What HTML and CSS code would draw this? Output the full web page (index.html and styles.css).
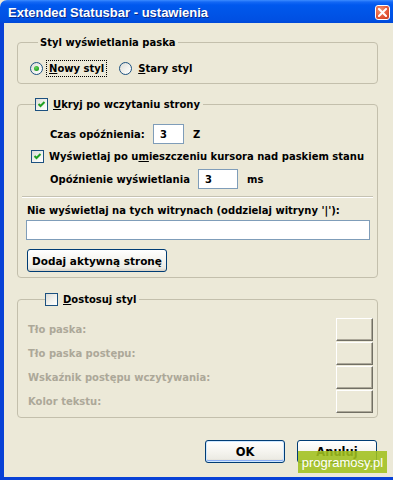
FILE: index.html
```html
<!DOCTYPE html>
<html lang="pl">
<head>
<meta charset="utf-8">
<title>Extended Statusbar - ustawienia</title>
<link rel="stylesheet" href="styles.css">
</head>
<body>
<div class="window">
  <div class="titlebar">
    <span class="title">Extended Statusbar - ustawienia</span>
    <span class="close"><svg width="9" height="9" viewBox="0 0 9 9"><path d="M1 1 L8 8 M8 1 L1 8" stroke="#fff" stroke-width="2" stroke-linecap="square"/></svg></span>
  </div>
  <div class="frame">
    <fieldset class="group g1">
      <legend class="legend">Styl wyświetlania paska</legend>
      <div class="radios">
        <div class="opt first"><span class="radio on"></span><span class="focus"><u>N</u>owy styl</span></div>
        <div class="opt"><span class="radio"></span><span class="optlbl"><u>S</u>tary styl</span></div>
      </div>
    </fieldset>

    <fieldset class="group g2">
      <legend class="legend chk-legend"><span class="check"><svg width="11" height="11" viewBox="0 0 11 11"><path d="M2.5 5 L4.5 7 L8.5 3" fill="none" stroke="#21a121" stroke-width="2"/></svg></span><span><u>U</u>kryj po wczytaniu strony</span></legend>
      <div class="row r-delay"><span class="lab lab-delay">Czas opóźnienia:</span><span class="field f-small">3</span><span class="unit">Z</span></div>
      <div class="row r-hover"><span class="check"><svg width="11" height="11" viewBox="0 0 11 11"><path d="M2.5 5 L4.5 7 L8.5 3" fill="none" stroke="#21a121" stroke-width="2"/></svg></span><span>Wyświetlaj po u<u>m</u>ieszczeniu kursora nad paskiem stanu</span></div>
      <div class="row r-show"><span class="lab lab-show">Opóźnienie wyświetlania</span><span class="field f-mid">3</span><span class="unit">ms</span></div>
      <div class="sep"></div>
      <div class="sites-label">Nie wyświetlaj na tych witrynach (oddzielaj witryny '|'):</div>
      <div class="field f-wide"></div>
      <button class="btn add">Dodaj aktywną stronę</button>
    </fieldset>

    <fieldset class="group g3">
      <legend class="legend chk-legend"><span class="check"></span><span><u>D</u>ostosuj styl</span></legend>
      <div class="crow"><span class="dis">Tło paska:</span><span class="swatch"></span></div>
      <div class="crow"><span class="dis">Tło paska postępu:</span><span class="swatch"></span></div>
      <div class="crow"><span class="dis">Wskaźnik postępu wczytywania:</span><span class="swatch"></span></div>
      <div class="crow"><span class="dis">Kolor tekstu:</span><span class="swatch"></span></div>
    </fieldset>

    <div class="footer">
      <button class="btn dlg default">OK</button>
      <button class="btn dlg">Anuluj</button>
    </div>
  </div>
  <div class="watermark">programosy.pl</div>
</div>
</body>
</html>
```

FILE: styles.css
```css
* { box-sizing: border-box; }
html, body { margin: 0; padding: 0; background: #ece9d8; }
body { font-family: "DejaVu Sans", Verdana, sans-serif; font-size: 10px; font-weight: bold; color: #000; }

.window {
  position: relative;
  width: 393px;
  height: 480px;
  display: flex;
  flex-direction: column;
  overflow: hidden;
}

.titlebar {
  height: 23px;
  flex: none;
  display: flex;
  align-items: center;
  justify-content: space-between;
  padding: 0 3px 0 8px;
  border-top-left-radius: 7px;
  background: linear-gradient(#3d8cff 0px, #1468f5 2px, #0058ee 5px, #0055e8 50%, #0050e3 85%, #0048d8 100%);
}
.title {
  color: #fff;
  font-family: "Liberation Sans", Arial, sans-serif;
  font-size: 13px;
  font-weight: bold;
  text-shadow: 1px 1px 0 #0a2a8a;
  margin-top: 1px;
}
.close {
  width: 15px;
  height: 15px;
  margin-top: 1px;
  border: 1px solid #fff;
  border-radius: 3px;
  background: radial-gradient(circle at 35% 30%, #f1946e 0%, #e4593a 55%, #c83a1c 100%);
  display: flex;
  align-items: center;
  justify-content: center;
}

.frame {
  flex: 1;
  border-left: 4px solid #0841d6;
  border-bottom: 3px solid #0841d6;
  display: flex;
  flex-direction: column;
}

.group {
  margin: 0 0 0 13px;
  width: 361px;
  border: 1px solid #c3bfac;
  border-radius: 4px;
  padding: 0;
  min-width: 0;
}
.legend {
  padding: 0 2px;
  margin-left: 8px;
  line-height: 13px;
  height: 13px;
  display: flex;
  align-items: center;
}
.chk-legend { margin-left: 17px; padding: 0 3px 0 0; gap: 5px; }

.g1 { margin-top: 13px; padding: 11px 0 6px 12px; }
.radios { display: flex; align-items: center; height: 17px; }
.opt { display: flex; align-items: center; }
.opt.first { margin-right: 12px; }
.radio {
  width: 13px;
  height: 13px;
  border-radius: 50%;
  border: 1px solid #1c5180;
  background: linear-gradient(135deg, #dcdcd7 0%, #f4f4f0 60%, #ffffff 100%);
  display: flex;
  align-items: center;
  justify-content: center;
  margin-right: 3px;
}
.radio.on::after {
  content: "";
  width: 5px;
  height: 5px;
  border-radius: 50%;
  background: radial-gradient(circle at 40% 35%, #66d35a 0%, #21a121 70%);
}
.focus {
  border: 1px dotted #000;
  padding: 1px 2px;
  line-height: 13px;
}
.optlbl { padding-left: 3px; }

.check {
  width: 13px;
  height: 13px;
  flex: none;
  border: 1px solid #1c5180;
  background: linear-gradient(135deg, #dcdcd7 0%, #f4f4f0 60%, #ffffff 100%);
  display: flex;
  align-items: center;
  justify-content: center;
}

.g2 { margin-top: 14px; padding: 13px 0 5px 0; }
.row { display: flex; align-items: center; }
.r-delay { height: 20px; padding-left: 32px; }
.r-hover { height: 13px; margin-top: 6px; padding-left: 13px; gap: 5px; }
.r-show { height: 20px; margin-top: 6px; padding-left: 32px; }
.lab-delay { width: 103px; }
.lab-show { width: 148px; }
.unit { margin-left: 9px; }
.field {
  height: 20px;
  border: 1px solid #7f9db9;
  background: #fff;
  padding-left: 6px;
  display: flex;
  align-items: center;
}
.f-small { width: 31px; }
.f-mid { width: 40px; }
.f-wide { width: 344px; margin: 3px 0 0 8px; }
.sep {
  margin: 7px 4px 0 4px;
  border-top: 1px solid #c5c2b2;
  border-bottom: 1px solid #fff;
}
.sites-label { margin: 6px 0 0 9px; line-height: 13px; }

.btn {
  font: inherit;
  color: #000;
  border: 1px solid #003c74;
  border-radius: 3px;
  background: linear-gradient(#ffffff 0%, #f5f4ef 50%, #ecebe4 85%, #d6d0c5 100%);
  padding: 0;
  height: 23px;
}
.add { width: 140px; margin: 9px 0 0 9px; display: block; font-size: 10.5px; }

.g3 { margin-top: 15px; padding: 12px 4px 4px 10px; display: flex; flex-direction: column; gap: 1px; }
.crow { height: 23px; display: flex; align-items: center; justify-content: space-between; }
.dis { color: #aca899; }
.swatch {
  width: 37px;
  height: 23px;
  background: #ece9d8;
  border: 1px solid;
  border-color: #ffffff #716f64 #716f64 #ffffff;
  box-shadow: inset -1px -1px 0 #aca899;
}

.footer {
  margin: 22px 0 0 13px;
  width: 361px;
  display: flex;
  justify-content: flex-end;
  gap: 12px;
  padding-right: 1px;
}
.dlg { width: 80px; font-size: 11.5px; }
.default { box-shadow: inset 0 0 0 1px #cee7ff, inset 0 -1px 0 1px #89adf4; }

.watermark {
  position: absolute;
  left: 298px;
  top: 451px;
  width: 89px;
  height: 22px;
  background: rgba(160, 192, 30, 0.88);
  color: #fff;
  font-family: "Liberation Sans", Arial, sans-serif;
  font-weight: normal;
  font-size: 13px;
  display: flex;
  align-items: center;
  justify-content: center;
}
```
